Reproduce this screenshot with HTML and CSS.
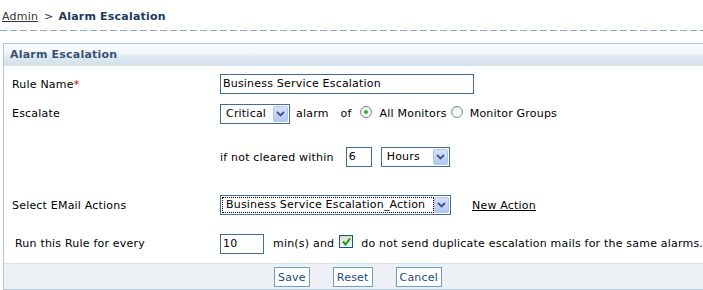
FILE: index.html
```html
<!DOCTYPE html>
<html>
<head>
<meta charset="utf-8">
<link rel="stylesheet" href="styles.css">
</head>
<body>
<div class="crumbs"><a class="crumb-link" href="#">Admin</a><span class="crumb-sep">&gt;</span><span class="crumb-cur">Alarm Escalation</span></div>
<div class="dash"></div>
<div class="panel">
  <div class="panel-head">Alarm Escalation</div>
  <div class="form">
    <div class="label r1">Rule Name<span class="req">*</span></div>
    <div class="field r1"><span class="input w-name">Business Service Escalation</span></div>

    <div class="label r2">Escalate</div>
    <div class="field r2">
      <span class="select w-crit"><span class="sel-text">Critical</span><span class="arrow"><svg width="9" height="6" viewBox="0 0 9 6"><path d="M1 1 L4.5 4.5 L8 1" fill="none" stroke="#3f5683" stroke-width="1.8"/></svg></span></span>
      <span class="t t-alarm">alarm</span>
      <span class="t t-of">of</span>
      <span class="radio on"><span class="dot"></span></span>
      <span class="t t-all">All Monitors</span>
      <span class="radio"></span>
      <span class="t t-grp">Monitor Groups</span>
    </div>

    <div class="label r3"></div>
    <div class="field r3">
      <span class="t">if not cleared within</span>
      <span class="input w-six">6</span>
      <span class="select w-hours"><span class="sel-text">Hours</span><span class="arrow"><svg width="9" height="6" viewBox="0 0 9 6"><path d="M1 1 L4.5 4.5 L8 1" fill="none" stroke="#3f5683" stroke-width="1.8"/></svg></span></span>
    </div>

    <div class="label r4">Select EMail Actions</div>
    <div class="field r4">
      <span class="select w-mail"><span class="sel-text focus">Business Service Escalation_Action</span><span class="arrow"><svg width="9" height="6" viewBox="0 0 9 6"><path d="M1 1 L4.5 4.5 L8 1" fill="none" stroke="#3f5683" stroke-width="1.8"/></svg></span></span>
      <a class="newact" href="#">New Action</a>
    </div>

    <div class="label r5 indent">Run this Rule for every</div>
    <div class="field r5">
      <span class="input w-ten">10</span>
      <span class="t t-min">min(s) and</span>
      <span class="check"><svg width="11" height="10" viewBox="0 0 11 10"><path d="M2 4.5 L4.5 7.5 L9 1.5" fill="none" stroke="#1a9a1a" stroke-width="2"/></svg></span>
      <span class="t t-dup">do not send duplicate escalation mails for the same alarms.</span>
    </div>
  </div>
  <div class="footer">
    <span class="btn">Save</span>
    <span class="btn">Reset</span>
    <span class="btn">Cancel</span>
  </div>
</div>
</body>
</html>
```
FILE: styles.css
```css
* { box-sizing: border-box; }
body {
  margin: 0;
  background: #fff;
  font-family: "DejaVu Sans", Verdana, sans-serif;
  font-size: 11px;
  letter-spacing: 0.2px;
  color: #000;
  width: 703px;
  height: 290px;
  overflow: hidden;
}
.crumbs {
  height: 30px;
  padding: 10px 0 0 2px;
  line-height: 14px;
  white-space: nowrap;
}
.crumb-link { color: #333; text-decoration: underline; }
.crumb-sep { color: #333; margin: 0 5px 0 6px; }
.crumb-cur { color: #1b3a5e; font-weight: bold; }
.dash {
  height: 1px;
  background: repeating-linear-gradient(to right, #8ca9c6 0 7px, transparent 7px 10px);
}
.panel {
  margin: 12px 0 0 3px;
  border-top: 1px solid #b3c8db;
  border-left: 1px solid #b3c8db;
}
.panel-head {
  height: 22px;
  padding: 3px 0 0 6px;
  font-weight: bold;
  color: #3a5275;
  line-height: 16px;
  background: linear-gradient(to bottom, #f6f9fd 0%, #f3f7fb 40%, #dde8f1 60%, #d3e0ea 100%);
}
.form {
  display: grid;
  grid-template-columns: 216px 1fr;
  grid-template-rows: 3px 30px 29px 58px 38px 39px;
}
.form::before { content: ""; grid-column: 1 / 3; }
.label {
  display: flex;
  align-items: center;
  padding-left: 8px;
  white-space: nowrap;
}
.label.indent { padding-left: 11px; }
.req { color: #d40000; }
.field {
  display: flex;
  align-items: center;
  white-space: nowrap;
}
.input {
  display: inline-block;
  height: 20px;
  border: 1px solid #3f6f98;
  padding: 1px 0 0 2px;
  line-height: 16px;
  background: #fff;
}
.w-name { width: 254px; }
.w-six { width: 26px; margin-left: 12px; }
.w-ten { width: 44px; }
.select {
  display: inline-flex;
  align-items: center;
  height: 20px;
  border: 1px solid #3f6f98;
  padding: 1px;
  background: #fff;
}
.sel-text { flex: 1; padding-left: 4px; line-height: 16px; height: 16px; }
.sel-text.focus { border: 1px dotted #000; line-height: 14px; padding-left: 3px; }
.arrow {
  width: 15px;
  height: 16px;
  border: 1px solid #b2c6ec;
  border-radius: 2px;
  background: linear-gradient(to bottom, #d5e1f8, #b1c7f2);
  display: flex;
  align-items: center;
  justify-content: center;
}
.w-crit { width: 70px; }
.w-hours { width: 69px; margin-left: 9px; }
.w-mail { width: 231px; }
.t-alarm { margin-left: 6px; }
.t-of { margin-left: 12px; }
.radio {
  width: 12px;
  height: 12px;
  border-radius: 50%;
  border: 1px solid #7b8794;
  background: radial-gradient(circle at 60% 65%, #ffffff 30%, #dde1e6 100%);
  display: inline-flex;
  align-items: center;
  justify-content: center;
  margin: -3px 8px 0 9px;
}
.radio + .t-grp { margin-left: -1px; }
.radio.on { margin-left: 8px; }
.dot { width: 4px; height: 4px; border-radius: 50%; background: #29b129; }
.t-all + .radio { margin-left: 4px; }
.newact { color: #000; text-decoration: underline; margin-left: 21px; }
.t-min { margin-left: 9px; }
.check {
  width: 14px;
  height: 13px;
  border: 1px solid #1d5486;
  background: linear-gradient(to bottom, #dcdcd8, #f4f4f0);
  display: inline-flex;
  align-items: center;
  justify-content: center;
  margin: -4px 8px 0 5px;
}
.footer {
  height: 27px;
  border-top: 1px solid #d3dfea;
  border-bottom: 1px solid #b3c8db;
  background: #edf1f6;
  padding: 3px 0 0 270px;
  display: flex;
  align-items: flex-start;
  gap: 23px;
}
.btn {
  height: 20px;
  border: 1px solid #6d9fcb;
  background: #fff;
  color: #1d4a80;
  padding: 0 3px;
  line-height: 19px;
}
```
